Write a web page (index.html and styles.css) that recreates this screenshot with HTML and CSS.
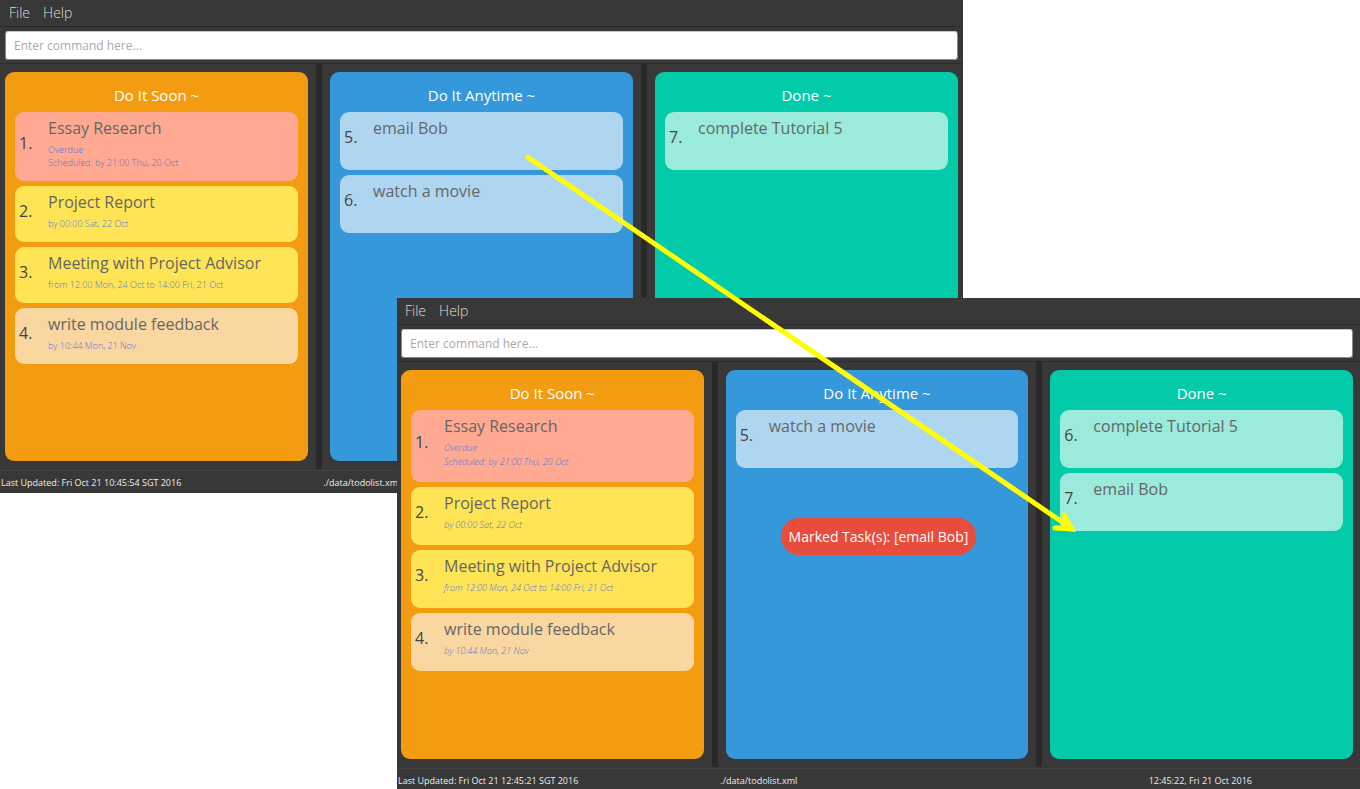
FILE: index.html
```html
<!DOCTYPE html>
<html lang="en">
<head>
<meta charset="utf-8">
<title>To-do list</title>
<link rel="stylesheet" href="styles.css">
</head>
<body>
<main class="desktop">
  <section class="window window-before">
    <nav class="menu"><button type="button">File</button><button type="button">Help</button></nav>
    <div class="command"><input type="text" aria-label="Command" placeholder="Enter command here..."></div>
    <div class="board">
      <section class="column">
        <div class="panel soon">
          <h2>Do It Soon ~</h2>
          <ul class="tasks">
            <li class="task overdue"><span class="num">1.</span><div class="body"><h3>Essay Research</h3><p>Overdue</p><p>Scheduled: by 21:00 Thu, 20 Oct</p></div></li>
            <li class="task near"><span class="num">2.</span><div class="body"><h3>Project Report</h3><p>by 00:00 Sat, 22 Oct</p></div></li>
            <li class="task near"><span class="num">3.</span><div class="body"><h3>Meeting with Project Advisor</h3><p>from 12:00 Mon, 24 Oct to 14:00 Fri, 21 Oct</p></div></li>
            <li class="task"><span class="num">4.</span><div class="body"><h3>write module feedback</h3><p>by 10:44 Mon, 21 Nov</p></div></li>
          </ul>
        </div>
      </section>
      <section class="column">
        <div class="panel anytime">
          <h2>Do It Anytime ~</h2>
          <ul class="tasks">
            <li class="task plain"><span class="num">5.</span><div class="body"><h3>email Bob</h3></div></li>
            <li class="task plain"><span class="num">6.</span><div class="body"><h3>watch a movie</h3></div></li>
          </ul>
        </div>
      </section>
      <section class="column">
        <div class="panel done">
          <h2>Done ~</h2>
          <ul class="tasks">
            <li class="task plain"><span class="num">7.</span><div class="body"><h3>complete Tutorial 5</h3></div></li>
          </ul>
        </div>
      </section>
    </div>
    <footer class="status"><span>Last Updated: Fri Oct 21 10:45:54 SGT 2016</span><span class="path">./data/todolist.xml</span><span></span></footer>
  </section>

  <section class="window window-after">
    <nav class="menu"><button type="button">File</button><button type="button">Help</button></nav>
    <div class="command"><input type="text" aria-label="Command" placeholder="Enter command here..."></div>
    <div class="board">
      <section class="column">
        <div class="panel soon">
          <h2>Do It Soon ~</h2>
          <ul class="tasks">
            <li class="task overdue"><span class="num">1.</span><div class="body"><h3>Essay Research</h3><p>Overdue</p><p>Scheduled: by 21:00 Thu, 20 Oct</p></div></li>
            <li class="task near"><span class="num">2.</span><div class="body"><h3>Project Report</h3><p>by 00:00 Sat, 22 Oct</p></div></li>
            <li class="task near"><span class="num">3.</span><div class="body"><h3>Meeting with Project Advisor</h3><p>from 12:00 Mon, 24 Oct to 14:00 Fri, 21 Oct</p></div></li>
            <li class="task"><span class="num">4.</span><div class="body"><h3>write module feedback</h3><p>by 10:44 Mon, 21 Nov</p></div></li>
          </ul>
        </div>
      </section>
      <section class="column">
        <div class="panel anytime">
          <h2>Do It Anytime ~</h2>
          <ul class="tasks">
            <li class="task plain"><span class="num">5.</span><div class="body"><h3>watch a movie</h3></div></li>
          </ul>
        </div>
      </section>
      <section class="column">
        <div class="panel done">
          <h2>Done ~</h2>
          <ul class="tasks">
            <li class="task plain"><span class="num">6.</span><div class="body"><h3>complete Tutorial 5</h3></div></li>
            <li class="task plain"><span class="num">7.</span><div class="body"><h3>email Bob</h3></div></li>
          </ul>
        </div>
      </section>
    </div>
    <footer class="status"><span>Last Updated: Fri Oct 21 12:45:21 SGT 2016</span><span class="path">./data/todolist.xml</span><span class="clock">12:45:22, Fri 21 Oct 2016</span></footer>
    <div class="toast" role="status">Marked Task(s): [email Bob]</div>
  </section>

  <svg class="arrow" width="560" height="386" viewBox="0 0 560 386" aria-hidden="true">
    <path d="M6 7L548 377" stroke-width="5"/>
    <path d="M544 366L551 379L535 379" stroke-width="5" stroke-linecap="round"/>
    <path class="tip" d="M546 365L556 383L535 381L545 376Z"/>
  </svg>
</main>
</body>
</html>
```

FILE: styles.css
```css
* {
  box-sizing: border-box;
}

body {
  margin: 0;
  background: #fff;
  font-family: "Open Sans", "Noto Sans", sans-serif;
}

h2, h3, p, ul {
  margin: 0;
  padding: 0;
  font-weight: 400;
}

.desktop {
  position: relative;
  min-height: 100vh;
  overflow: hidden;
}

.window {
  position: absolute;
  background: #383838;
}

.window-before {
  top: 0;
  left: 0;
  right: 397px;
}

.window-after {
  top: 298px;
  left: 397px;
  right: 0;
}

.menu {
  display: flex;
  gap: 13px;
  padding: 2px 9px;
  border-bottom: 1px solid #2b2b2b;
}

.menu button {
  padding: 0;
  border: 0;
  background: none;
  color: #dcdcdc;
  font: 300 14px/22px "Open Sans", "Noto Sans", sans-serif;
}

.window-after .menu {
  padding-left: 8px;
}

.command {
  padding: 4px 5px 3px;
  border-bottom: 1px solid #2b2b2b;
}

.command input {
  display: block;
  width: 100%;
  height: 29px;
  padding: 0 8px;
  border: 1px solid #8a8a8a;
  border-top-color: #c4c4c4;
  border-radius: 3px;
  background: #fff;
  color: #333;
  font: 400 12px/20px "Open Sans", "Noto Sans", sans-serif;
}

.command input::placeholder {
  color: #aaa;
  opacity: 1;
}

.board {
  display: flex;
  padding: 0 5px 1px;
}

.window-after .command,
.window-after .board {
  padding-left: 4px;
  padding-right: 7px;
}

.column {
  flex: 1;
  padding: 8px 0;
}

.column + .column {
  margin-left: 8px;
  padding-left: 8px;
  border-left: 6px solid #292929;
}

.panel {
  min-height: 389px;
  padding: 12px 10px;
  border-radius: 9px;
}

.soon { background: #f39c12; }
.anytime { background: #3498db; }
.done { background: #03cbaa; }

.panel h2 {
  margin-bottom: 6px;
  color: #fff;
  font-size: 15px;
  line-height: 22px;
  text-align: center;
}

.tasks {
  display: flex;
  flex-direction: column;
  gap: 5px;
  list-style: none;
}

.task {
  display: flex;
  align-items: center;
  padding: 5px 4px 12px;
  border-radius: 9px;
  background: #fad7a0;
}

.overdue { background: #ffa992; }
.near { background: #ffe555; }

.plain {
  align-items: flex-start;
  min-height: 58px;
}

.anytime .task { background: #aed6f1; }
.done .task { background: #9aebdc; }

.num {
  flex: 0 0 29px;
  color: #444;
  font-size: 16px;
  line-height: 22px;
}

.plain .num {
  padding-top: 9px;
}

.body {
  flex: 1;
}

.task h3 {
  margin-bottom: 4px;
  color: #666;
  font-size: 16px;
  line-height: 22px;
}

.task p {
  color: #5877d6;
  font-size: 9px;
  font-weight: 300;
  line-height: 13px;
}

.window-after .task {
  padding-bottom: 13px;
}

.window-after .task p {
  font-style: italic;
  line-height: 14px;
}

.status {
  display: flex;
  padding: 4px 0 2px;
  border-top: 1px solid #434343;
  color: #eee;
  font-size: 9px;
  line-height: 16px;
}

.status span {
  flex: 1;
  padding-left: 1px;
}

.status .path {
  padding-left: 3px;
}

.status .clock {
  text-align: center;
}

.toast {
  position: absolute;
  top: 220px;
  left: 50%;
  padding: 7px 8px;
  border-radius: 18px;
  background: #e74c3c;
  color: #fff;
  font-size: 14px;
  line-height: 23px;
  white-space: nowrap;
  transform: translateX(-50%);
}

.arrow {
  position: absolute;
  top: 149px;
  left: 520px;
  fill: none;
  stroke: #ff0;
  pointer-events: none;
}

.arrow .tip {
  fill: #ff0;
  stroke: none;
}
```
